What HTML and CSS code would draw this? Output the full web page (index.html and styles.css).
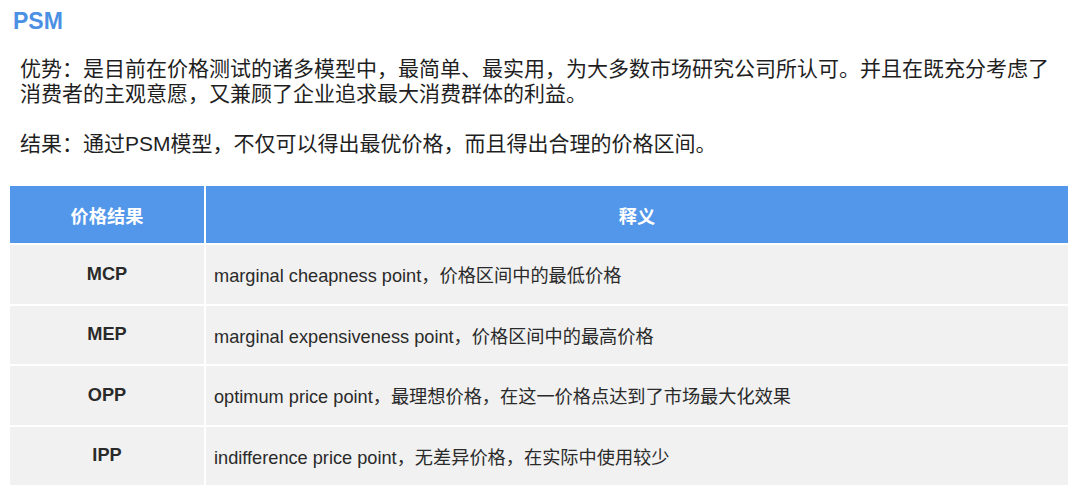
FILE: index.html
```html
<!DOCTYPE html>
<html lang="zh">
<head>
<meta charset="utf-8">
<link rel="stylesheet" href="styles.css">
</head>
<body>
<div class="page">
  <h1 class="title">PSM</h1>
  <div class="intro">
    <p>优势：是目前在价格测试的诸多模型中，最简单、最实用，为大多数市场研究公司所认可。并且在既充分考虑了消费者的主观意愿，又兼顾了企业追求最大消费群体的利益。</p>
    <p>结果：通过PSM模型，不仅可以得出最优价格，而且得出合理的价格区间。</p>
  </div>
  <table class="grid">
    <thead>
      <tr><th class="c1">价格结果</th><th class="c2">释义</th></tr>
    </thead>
    <tbody>
      <tr><td class="c1">MCP</td><td class="c2">marginal cheapness point，价格区间中的最低价格</td></tr>
      <tr><td class="c1">MEP</td><td class="c2">marginal expensiveness point，价格区间中的最高价格</td></tr>
      <tr><td class="c1">OPP</td><td class="c2">optimum price point，最理想价格，在这一价格点达到了市场最大化效果</td></tr>
      <tr><td class="c1">IPP</td><td class="c2">indifference price point，无差异价格，在实际中使用较少</td></tr>
    </tbody>
  </table>
</div>
</body>
</html>
```

FILE: styles.css
```css
html, body {
  margin: 0;
  padding: 0;
  background: #ffffff;
}
body {
  font-family: "Liberation Sans", "Noto Sans CJK SC", sans-serif;
  color: #1f1f1f;
}
.page {
  padding: 6px 12px 0 10px;
}
.title {
  margin: 0 0 0 3px;
  font-size: 23px;
  line-height: 30px;
  font-weight: bold;
  color: #4b90e3;
}
.intro {
  margin: 20px 0 0 10px;
  width: 1040px;
  font-size: 21px;
  line-height: 25px;
}
.intro p {
  margin: 0 0 25px 0;
}
.intro p:last-child {
  margin-bottom: 0;
}
.grid {
  border-collapse: separate;
  border-spacing: 2px;
  margin: 28px 0 0 -2px;
  width: 1062px;
  font-size: 18.2px;
}
.grid th {
  background: #5397ea;
  color: #ffffff;
  font-weight: bold;
  height: 57px;
  padding: 0;
  text-align: center;
}
.grid td {
  background: #f1f1f1;
  height: 58.5px;
  padding: 0;
  color: #2a2a2a;
}
.grid th.c1, .grid td.c1 {
  width: 194px;
}
.grid td.c1 {
  text-align: center;
  font-weight: bold;
}
.grid td.c2 {
  padding-left: 8px;
}
```
